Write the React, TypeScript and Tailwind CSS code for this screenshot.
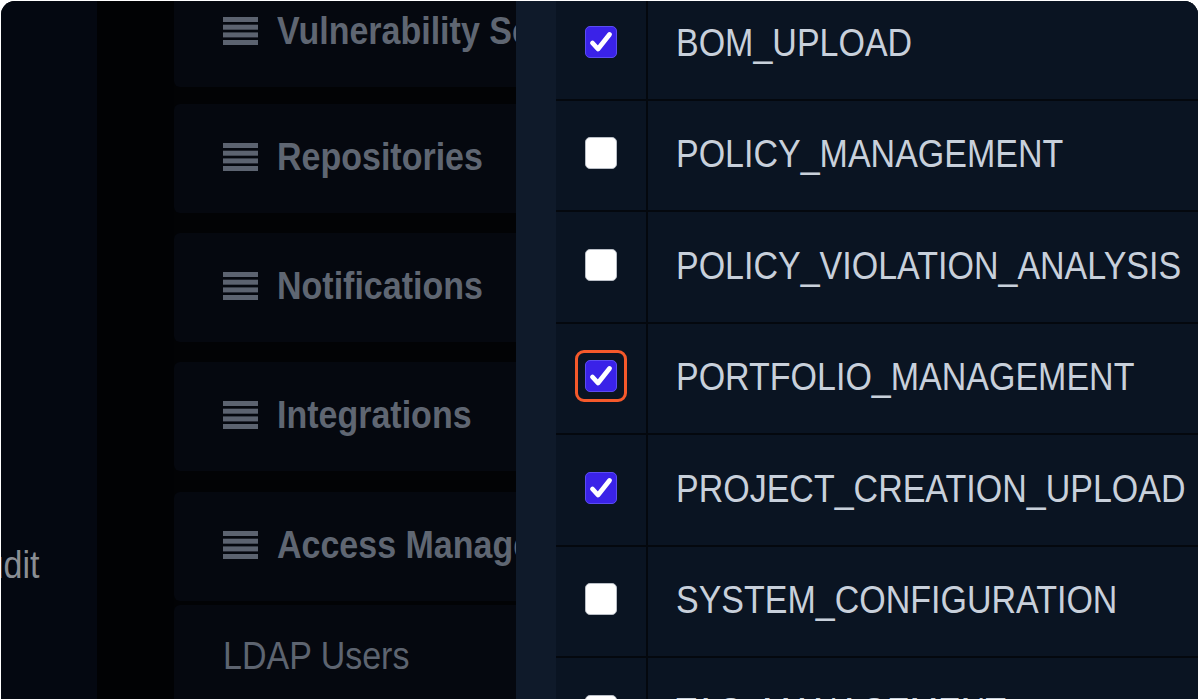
import React from 'react';

const font = { fontFamily: '"Liberation Sans", Arial, sans-serif' };

function MenuIcon() {
  return (
    <svg width="35" height="28" viewBox="0 0 35 28" className="shrink-0">
      <rect x="0" y="0" width="35" height="5" fill="#5c6370" />
      <rect x="0" y="7.7" width="35" height="5" fill="#5c6370" />
      <rect x="0" y="15.4" width="35" height="5" fill="#5c6370" />
      <rect x="0" y="23" width="35" height="5" fill="#5c6370" />
    </svg>
  );
}

function SectionCard({ title, className = '' }: { title: string; className?: string }) {
  return (
    <div className={`w-[420px] h-[109px] shrink-0 rounded-md bg-[#05080f] flex items-center pl-[49px] pb-[4px] gap-[19px] ${className}`}>
      <MenuIcon />
      <span className="inline-block scale-y-[1.12] text-[34px] font-bold text-[#5f6672] whitespace-nowrap leading-none">
        {title}
      </span>
    </div>
  );
}

function Checkbox({ checked, highlight }: { checked: boolean; highlight?: boolean }) {
  const box = checked ? (
    <div className="w-8 h-8 rounded-[5px] bg-[#3a22e8] border border-[#5b4cf2] flex items-center justify-center">
      <svg width="24" height="22" viewBox="0 0 24 22">
        <path d="M3.5 12 L9 18 L20.5 3.5" fill="none" stroke="white" strokeWidth="4.8" strokeLinecap="round" strokeLinejoin="round" />
      </svg>
    </div>
  ) : (
    <div className="w-8 h-8 rounded-[5px] bg-white border border-[#b9bec6]" />
  );
  if (!highlight) return box;
  return (
    <div className="rounded-[9px] border-[3px] border-[#f5592b] p-[7px] -m-[10px]">{box}</div>
  );
}

const perms = [
  { name: 'BOM_UPLOAD', checked: true },
  { name: 'POLICY_MANAGEMENT', checked: false },
  { name: 'POLICY_VIOLATION_ANALYSIS', checked: false },
  { name: 'PORTFOLIO_MANAGEMENT', checked: true, highlight: true },
  { name: 'PROJECT_CREATION_UPLOAD', checked: true },
  { name: 'SYSTEM_CONFIGURATION', checked: false },
  { name: 'TAG_MANAGEMENT', checked: false },
];

export default function App() {
  return (
    <div className="w-[1200px] h-[699px] bg-white pt-px pl-px pr-[2px] overflow-hidden" style={font}>
      <div className="flex h-[740px] rounded-[14px] overflow-hidden bg-[#040810]">
        {/* far left nav column */}
        <div className="w-[96px] shrink-0 bg-[#040811] overflow-hidden flex flex-col pt-[547px]">
          <span className="inline-block ml-[-39px] scale-y-[1.12] text-[34px] text-[#8a8e94] whitespace-nowrap leading-none">
            Audit
          </span>
        </div>
        <div className="w-[77px] shrink-0 bg-[#010204]" />

        {/* settings menu cards */}
        <div className="w-[342px] shrink-0 bg-[#020305] overflow-hidden flex flex-col -mt-px">
          <SectionCard title="Vulnerability Sources" className="-mt-[22px]" />
          <SectionCard title="Repositories" className="mt-[17px]" />
          <SectionCard title="Notifications" className="mt-[20px]" />
          <SectionCard title="Integrations" className="mt-[20px] h-[108px]" />
          <SectionCard title="Access Management" className="mt-[21px] h-[108px]" />
          <div className="w-[420px] h-[160px] shrink-0 mt-[4px] rounded-t-md bg-[#05080f] flex items-start pl-[49px] pt-[34px]">
            <span className="inline-block scale-y-[1.12] text-[34px] text-[#5d6470] whitespace-nowrap leading-none">
              LDAP Users
            </span>
          </div>
        </div>

        {/* permissions panel */}
        <div className="flex-1 bg-[#0f1a2a] pl-[40px] overflow-hidden">
          <div className="flex flex-col -mt-[12px] bg-[#0a1422]">
            {perms.map((p) => (
              <div key={p.name} className="flex h-[111.5px] shrink-0 border-b-2 border-[#04080e]">
                <div className="w-[92px] shrink-0 border-r-2 border-[#04080e] flex items-center justify-center pb-[4px]">
                  <Checkbox checked={p.checked} highlight={p.highlight} />
                </div>
                <div className="flex items-center pl-[28px] pb-[2px]">
                  <span className="inline-block scale-y-[1.12] text-[34px] text-[#c8d0db] whitespace-nowrap leading-none">
                    {p.name}
                  </span>
                </div>
              </div>
            ))}
          </div>
        </div>
      </div>
    </div>
  );
}
